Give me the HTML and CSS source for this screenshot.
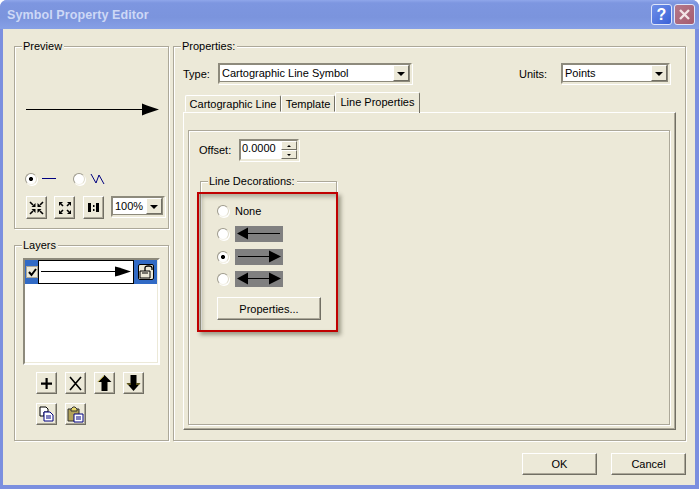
FILE: index.html
```html
<!DOCTYPE html>
<html lang="en">
<head>
<meta charset="utf-8">
<title>Symbol Property Editor</title>
<link rel="stylesheet" href="styles.css">
</head>
<body>
<div class="window">
  <div class="titlebar">
    <span class="title">Symbol Property Editor</span>
    <span class="cap help">?</span>
    <span class="cap close"><svg width="13" height="13" viewBox="0 0 13 13"><path d="M2 2l9 9M11 2l-9 9" stroke="#f3e4e6" stroke-width="2.4" fill="none"/></svg></span>
  </div>
  <div class="client">
    <div class="columns">
      <div class="left">
        <section class="group preview">
          <span class="legend">Preview</span>
          <svg class="preview-line" width="136" height="20" viewBox="0 0 136 20"><path d="M0 10.500H118" stroke="#000"/><path d="M116 4.500v12l5-2 12-4-12-4z" fill="#000"/></svg>
          <div class="mode">
            <span class="radio on"></span>
            <svg class="glyph" width="15" height="14" viewBox="0 0 15 14"><path d="M0 6.500H14" stroke="#000080"/></svg>
            <span class="radio second"></span>
            <svg class="glyph" width="15" height="14" viewBox="0 0 15 14"><path d="M1 2l5 9 3-8 5 9" stroke="#000080" fill="none"/></svg>
          </div>
          <div class="zoombar">
            <button class="btn tool"><svg width="15" height="14" viewBox="0 0 15 14"><path d="M1 1l3 3M14 1l-3 3M1 13l3-3M14 13l-3-3" stroke="#000" stroke-width="1.600"/><path d="M6.500 2v4h-4zM8.500 2v4h4zM6.500 12V8h-4zM8.500 12V8h4z" fill="#000"/></svg></button>
            <button class="btn tool"><svg width="14" height="14" viewBox="0 0 14 14"><path d="M3 3l2 2M11 3L9 5M3 11l2-2M11 11L9 9" stroke="#000" stroke-width="1.600"/><path d="M1 1h4L1 5zM13 1H9l4 4zM1 13h4l-4-4zM13 13H9l4-4z" fill="#000"/></svg></button>
            <button class="btn tool third"><svg width="11" height="9" viewBox="0 0 11 9"><path d="M0 0h3v9H0zM8 0h3v9H8zM5 2h1.500v2H5zM5 6h1.500v2H5z" fill="#000"/></svg></button>
            <div class="combo small"><span class="combo-text">100%</span><span class="drop"></span></div>
          </div>
        </section>
        <section class="group layers">
          <span class="legend">Layers</span>
          <div class="listbox">
            <div class="layer">
              <span class="check"><svg width="9" height="9" viewBox="0 0 9 9"><path d="M1 4l2.500 3L8 1" stroke="#000" stroke-width="2" fill="none"/></svg></span>
              <span class="swatch"><svg width="92" height="20" viewBox="0 0 92 20"><path d="M2 9.500H78" stroke="#000"/><path d="M76 4.500v10l4-1 12-4-12-4z" fill="#000"/></svg></span>
              <span class="lockbtn"><svg width="14" height="14" viewBox="0 0 14 14"><path d="M1 6h10v7H1z" fill="#ece9d8" stroke="#000"/><path d="M3 8h6" stroke="#000"/><path d="M6 6V3q0-2 3-2h1q3 0 3 2v2" fill="none" stroke="#000" stroke-width="1.300"/></svg></span>
            </div>
          </div>
          <div class="tools">
            <button class="btn tool"><svg width="11" height="11" viewBox="0 0 11 11"><path d="M4.500 0h2.200v4.500H11v2.200H6.700V11H4.500V6.700H0V4.500h4.500z" fill="#000"/></svg></button>
            <button class="btn tool"><svg width="15" height="15" viewBox="0 0 15 15"><path d="M2 1l11 13M13 1L2 14" stroke="#000" stroke-width="1.600"/></svg></button>
            <button class="btn tool"><svg width="15" height="16" viewBox="0 0 15 16"><path d="M7.500 0l7 7H10.500v9h-6V7H.5z" fill="#000"/><path d="M1 7l6-6" stroke="#b5a53a"/></svg></button>
            <button class="btn tool"><svg width="15" height="16" viewBox="0 0 15 16"><path d="M4.500 0h6v8h4l-7 8-7-8h4z" fill="#000"/><path d="M1 9h4M10 9h4" stroke="#b5a53a"/></svg></button>
            <button class="btn tool"><svg width="16" height="16" viewBox="0 0 16 16"><path d="M1 1h6l2 2v3H5v4H1z" fill="#fff" stroke="#000"/><path d="M5 6h6l3 3v6H5z" fill="#fff" stroke="#000080"/><path d="M7 10h5M7 12h5" stroke="#000080"/></svg></button>
            <button class="btn tool"><svg width="17" height="17" viewBox="0 0 17 17"><path d="M1 3h11v12H1z" fill="#b1a25a" stroke="#333"/><path d="M4 3l2-2h2l2 2v2H4z" fill="#e8d86a" stroke="#333"/><path d="M7 8h9v8H7z" fill="#fff" stroke="#000080"/><path d="M9 11h5M9 13h5" stroke="#000080"/></svg></button>
          </div>
        </section>
      </div>
      <section class="group props">
        <span class="legend">Properties:</span>
        <div class="top-row">
          <span class="label type-label">Type:</span>
          <div class="combo type"><span class="combo-text">Cartographic Line Symbol</span><span class="drop"></span></div>
          <span class="label units-label">Units:</span>
          <div class="combo units"><span class="combo-text">Points</span><span class="drop"></span></div>
        </div>
        <div class="tabs">
          <span class="tab tab-a">Cartographic Line</span>
          <span class="tab tab-b">Template</span>
          <span class="tab active">Line Properties</span>
        </div>
        <div class="panel">
          <div class="inner">
            <div class="offset">
              <span class="label">Offset:</span>
              <div class="spin">
                <span class="spin-text">0.0000</span>
                <span class="spin-btns"><span class="spin-up"></span><span class="spin-down"></span></span>
              </div>
            </div>
            <section class="group deco">
              <span class="legend">Line Decorations:</span>
              <div class="choices">
                <div class="choice"><span class="radio"></span><span class="label">None</span></div>
                <div class="choice"><span class="radio"></span><svg class="sample" width="48" height="16" viewBox="0 0 48 16"><path d="M0 0h48v16H0z" fill="#808080"/><path d="M10 7.500H45" stroke="#000"/><path d="M2 7.500l11-6v12z" fill="#000"/></svg></div>
                <div class="choice"><span class="radio on"></span><svg class="sample" width="48" height="16" viewBox="0 0 48 16"><path d="M0 0h48v16H0z" fill="#808080"/><path d="M3 7.500H38" stroke="#000"/><path d="M46 7.500L34 1.500v12z" fill="#000"/></svg></div>
                <div class="choice last"><span class="radio"></span><svg class="sample" width="48" height="16" viewBox="0 0 48 16"><path d="M0 0h48v16H0z" fill="#808080"/><path d="M10 7.500H38" stroke="#000"/><path d="M46 7.500L34 1.500v12zM2 7.500l11-6v12z" fill="#000"/></svg></div>
              </div>
              <button class="btn props-btn">Properties...</button>
              <div class="callout"></div>
            </section>
          </div>
        </div>
      </section>
    </div>
    <div class="actions">
      <button class="btn action">OK</button>
      <button class="btn action">Cancel</button>
    </div>
  </div>
</div>
</body>
</html>
```
FILE: styles.css
```css
* { box-sizing: border-box; }
html, body { margin: 0; padding: 0; }
body { width: 699px; height: 489px; overflow: hidden; font: 11px "Liberation Sans", Arial, sans-serif; color: #000; }
.window { width: 699px; height: 489px; display: flex; flex-direction: column; background: #7b8fdf; border-radius: 7px 7px 0 0; overflow: hidden; }
.titlebar { height: 29px; flex: none; display: flex; align-items: center; padding: 0 4px 0 7px; gap: 2px; background: linear-gradient(#8fa6ea 0, #7d96e0 3px, #7b94dd 60%, #86a0e6 100%); }
.title { flex: 1; font-weight: bold; font-size: 12.500px; color: #cdd8f6; letter-spacing: .1px; }
.cap { width: 21px; height: 21px; border-radius: 3px; border: 1px solid #dfe6fa; display: flex; align-items: center; justify-content: center; }
.help { background: linear-gradient(135deg, #6f8fe8, #3a62d8); color: #fff; font-weight: bold; font-size: 16px; }
.close { background: linear-gradient(135deg, #b5788a, #a55c70); margin-left: 0; }
.client { width: 692px; height: 456px; margin-left: 3px; padding: 17px 9px 0 11px; background: #ece9d8; display: flex; flex-direction: column; flex: none; }
.columns { display: flex; gap: 4px; height: 395px; }
.left { width: 155px; display: flex; flex-direction: column; gap: 16px; flex: none; }
.group { position: relative; border: 1px solid #aca899; box-shadow: 1px 1px 0 #fff, inset 1px 1px 0 #fff; }
.legend { position: absolute; top: -7px; left: 7px; padding: 0 2px 0 1px; background: #ece9d8; line-height: 13px; white-space: nowrap; }
.preview { height: 183px; padding: 52px 0 0 11px; }
.preview-line { display: block; }
.mode { display: flex; align-items: center; height: 14px; margin: 53px 0 0 -1px; }
.glyph { margin-left: 5px; }
.radio { width: 12px; height: 12px; flex: none; border-radius: 50%; border: 1px solid; border-color: #9d9a8c #dedbca #f4f2e8 #9d9a8c; background: #fff; box-shadow: 1px 1px 0 #fff; }
.radio.on { background: radial-gradient(circle, #000 1.800px, #fff 2.300px); }
.second { margin-left: 16px; }
.zoombar { display: flex; align-items: flex-start; margin-top: 10px; }
.btn { font: inherit; color: #000; padding: 0; background: #ece9d8; border: 1px solid; border-color: #fff #716f64 #716f64 #fff; box-shadow: inset -1px -1px 0 #aca899; display: flex; align-items: center; justify-content: center; }
.tool { width: 21px; height: 23px; margin-right: 7px; }
.third { margin-left: 1px; }
.combo { display: flex; background: #fff; border: 2px solid; border-color: #8d8a7c #ece9d8 #ece9d8 #8d8a7c; box-shadow: 1px 1px 0 #fff, inset -1px -1px 0 #8d8a7c; align-items: stretch; padding: 0 1px 1px 0; }
.combo-text { flex: 1; padding-left: 2px; line-height: 17px; font-size: 11px; }
.drop { width: 16px; background: #ece9d8; border: 1px solid; border-color: #fff #716f64 #716f64 #fff; position: relative; }
.drop::after { content: ""; position: absolute; left: 3px; top: 6px; border: 4px solid transparent; border-top: 4px solid #000; border-bottom: 0; }
.small { width: 54px; height: 21px; margin-left: 0; }
.layers { height: 196px; padding: 12px 0 0 8px; }
.listbox { width: 137px; height: 107px; background: #fff; border: 2px solid #8d8a7c; border-color: #8d8a7c #fff #fff #8d8a7c; box-shadow: inset -1px -1px 0 #ece9d8; padding-top: 0; }
.layer { height: 24px; background: #316ac5; display: flex; align-items: center; padding-left: 1px; margin-right: 1px; }
.check { width: 12px; height: 12px; background: #ece9d8; border: 1px solid #aca899; display: flex; align-items: center; justify-content: center; }
.swatch { width: 96px; height: 24px; background: #fff; border: 1px solid #000; display: flex; align-items: center; }
.lockbtn { width: 16px; height: 16px; margin-left: 4px; background: #ece9d8; border: 1px solid #000; border-radius: 2px; display: flex; align-items: center; justify-content: center; }
.tools { display: flex; flex-wrap: wrap; width: 120px; margin: 7px 0 0 13px; row-gap: 9px; column-gap: 8px; }
.tools .tool { height: 22px; margin: 0; }
.tools .tool:nth-child(2) { margin-right: 0; }
.props { width: 513px; padding: 16px 0 0 9px; }
.top-row { display: flex; align-items: center; height: 21px; }
.label { line-height: 14px; white-space: nowrap; }
.type-label { width: 35px; }
.type { width: 194px; height: 21px; }
.units-label { margin-left: 107px; width: 42px; }
.units { width: 109px; height: 21px; }
.tabs { display: flex; align-items: flex-end; height: 20px; margin: 8px 0 0 2px; }
.tab { height: 17px; display: flex; align-items: center; justify-content: center; border: 1px solid #aca899; border-color: #fff #716f64 transparent #fff; border-radius: 2px 2px 0 0; white-space: nowrap; }
.tab-a { width: 96px; }
.tab-b { width: 54px; }
.tab.active { width: 85px; border-bottom: 0; position: relative; z-index: 1; margin-bottom: -1px; height: 21px; padding-bottom: 3px; }
.panel { width: 493px; height: 318px; border: 1px solid; border-color: #fff #716f64 #716f64 #fff; box-shadow: inset -1px -1px 0 #aca899; padding: 17px 0 0 4px; }
.inner { width: 482px; height: 295px; border: 1px solid #aca899; box-shadow: 1px 1px 0 #fff, inset 1px 1px 0 #fff; padding: 8px 0 0 10px; }
.offset { display: flex; align-items: center; height: 22px; }
.offset .label { width: 40px; }
.spin { width: 60px; height: 22px; display: flex; background: #fff; border: 2px solid; border-color: #8d8a7c #ece9d8 #ece9d8 #8d8a7c; box-shadow: 1px 1px 0 #fff; }
.spin-text { flex: 1; padding-left: 1px; line-height: 15px; }
.spin-btns { width: 16px; display: flex; flex-direction: column; }
.spin-up, .spin-down { flex: 1; background: #ece9d8; border: 1px solid; border-color: #fff #716f64 #716f64 #fff; position: relative; }
.spin-up::after, .spin-down::after { content: ""; position: absolute; left: 5px; top: 3px; border: 2px solid transparent; }
.spin-up::after { border-bottom: 2px solid #000; border-top: 0; }
.spin-down::after { border-top: 2px solid #000; border-bottom: 0; }
.deco { width: 137px; height: 150px; margin: 20px 0 0 1px; padding: 21px 0 0 16px; }
.choices { display: flex; flex-direction: column; gap: 7px; }
.choice { display: flex; align-items: center; height: 16px; gap: 6px; }
.choice.last { margin-top: -1px; }
.sample { display: block; }
.props-btn { width: 104px; height: 23px; margin-top: 10px; }
.callout { position: absolute; left: -4px; top: 10px; width: 141px; height: 140px; border: 2px solid #c00000; box-shadow: 3px 3px 4px rgba(60, 60, 40, .45), inset 3px 3px 4px rgba(60, 60, 40, .35); pointer-events: none; }
.actions { display: flex; justify-content: flex-end; gap: 14px; margin-top: 12px; }
.action { width: 75px; height: 22px; }
```
